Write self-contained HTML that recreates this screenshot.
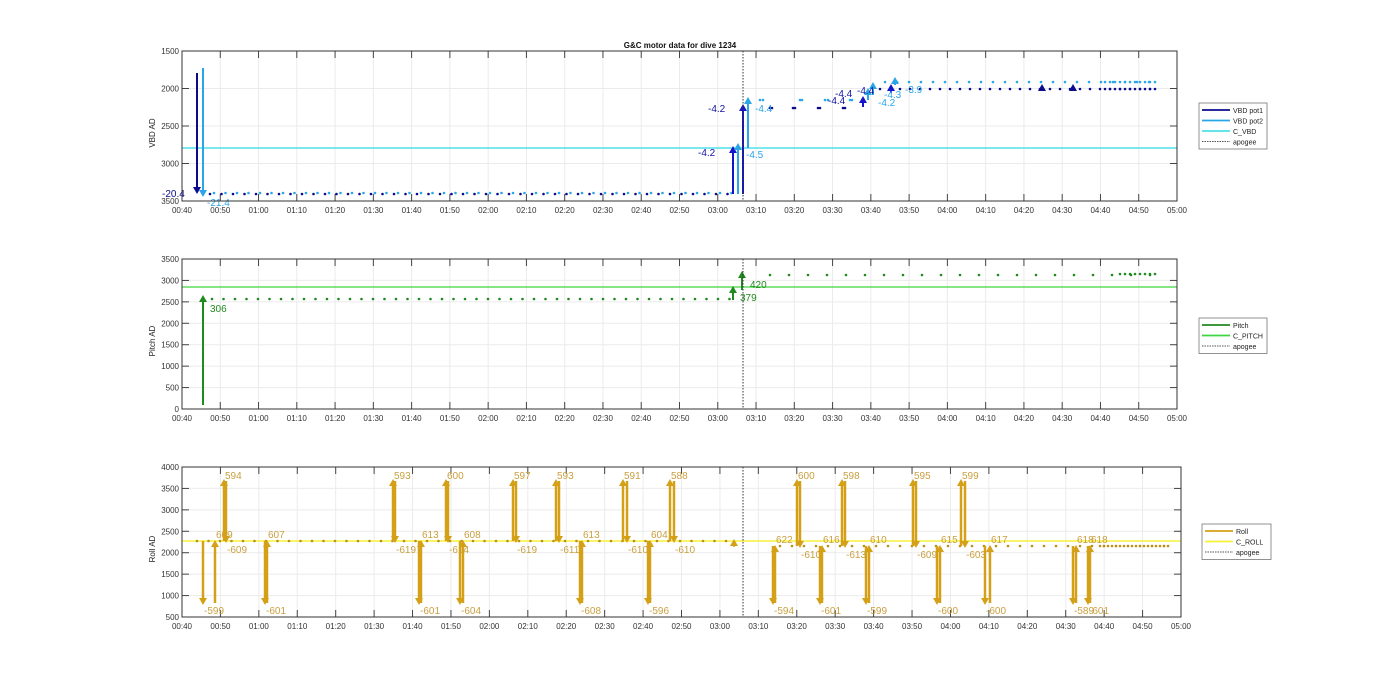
<!DOCTYPE html>
<html><head><meta charset="utf-8"><style>
html,body{margin:0;padding:0;background:#fff;}
svg{display:block;font-family:"Liberation Sans",sans-serif;}
</style></head><body>
<svg id="s" width="1400" height="693" xmlns="http://www.w3.org/2000/svg"></svg>
<script>
const S=document.getElementById('s');let h='';
const X0=182,X1=1177;
function axes(yt,yb,ymin,ymax,step,ylabel,x1){
  x1=x1||X1;
  h+=`<rect x="${X0}" y="${yt}" width="${x1-X0}" height="${yb-yt}" fill="#fff" stroke="none"/>`;
  for(let m=40;m<=300;m+=10){const x=X0+(m-40)*(x1-X0)/260;
    h+=`<line x1="${x}" y1="${yt}" x2="${x}" y2="${yb}" stroke="#ebebeb" stroke-width="1"/>`;
    h+=`<line x1="${x}" y1="${yb}" x2="${x}" y2="${yb-7}" stroke="#444"/><line x1="${x}" y1="${yt}" x2="${x}" y2="${yt+7}" stroke="#444"/>`;
    const hh=Math.floor(m/60),mm=m%60;
    h+=`<text x="${x}" y="${yb+12}" font-size="8" fill="#333" text-anchor="middle">0${hh}:${mm<10?'0'+mm:mm}</text>`;}
  for(let v=ymin;v<=ymax;v+=step){const y=yb-(v-ymin)/(ymax-ymin)*(yb-yt);
    h+=`<line x1="${X0}" y1="${y}" x2="${x1}" y2="${y}" stroke="#ebebeb"/>`;
    h+=`<line x1="${X0}" y1="${y}" x2="${X0+7}" y2="${y}" stroke="#444"/><line x1="${x1}" y1="${y}" x2="${x1-7}" y2="${y}" stroke="#444"/>`;}
  h+=`<text x="${X0-34}" y="${(yt+yb)/2}" font-size="8" fill="#222" text-anchor="middle" transform="rotate(-90 ${X0-27} ${(yt+yb)/2})">${ylabel}</text>`;
}
function border(yt,yb,x1){x1=x1||X1;h+=`<rect x="${X0}" y="${yt}" width="${x1-X0}" height="${yb-yt}" fill="none" stroke="#333" stroke-width="1"/>`;}
function ylab(y,t){h+=`<text x="${X0-3}" y="${y+3}" font-size="8" fill="#333" text-anchor="end">${t}</text>`;}
function arrow(x,y1,y2,c,w){w=w||2;const d=y2<y1?1:-1;
  h+=`<line x1="${x}" y1="${y1}" x2="${x}" y2="${y2+d*5}" stroke="${c}" stroke-width="${w}"/>`;
  h+=`<polygon points="${x-4},${y2+d*7} ${x+4},${y2+d*7} ${x},${y2}" fill="${c}"/>`;}
function txt(x,y,t,c,s){h+=`<text x="${x}" y="${y}" font-size="${s||10}" fill="${c}">${t}</text>`;}
function dot(x,y,c){h+=`<circle cx="${x}" cy="${y}" r="1.3" fill="${c}"/>`;}
h+=`<text x="680" y="48" font-size="8" font-weight="bold" text-anchor="middle" fill="#111">G&amp;C motor data for dive 1234</text>`;
// Plot 1
axes(51,201,1500,3500,500,'VBD AD');
[[51,'1500'],[88.5,'2000'],[126,'2500'],[163.5,'3000'],[201,'3500']].forEach(a=>ylab(a[0],a[1]));
h+=`<line x1="${X0}" y1="148" x2="${X1}" y2="148" stroke="#4fe0e8" stroke-width="1.5"/>`;
const DB='#0b0b8c',LB='#2aa6e8';
for(let x=210;x<735;x+=11.5){dot(x,194,DB);dot(x+4,193,LB);}
[770,772,793,795,818,820,843,845].forEach(x=>dot(x,108,DB));
[760,763,800,802,825,828,850,852].forEach(x=>dot(x,100,LB));
for(let x=880;x<1158;x+=10){dot(x,89,DB);}
for(let x=885;x<1160;x+=12){dot(x,82,LB);}
for(let x=1105;x<1160;x+=5){dot(x,82,LB);dot(x,89,DB);}
arrow(197,73,194,DB);arrow(203,68,197,LB);
txt(162,197,'-20.4',DB);txt(207,206,'-21.4',LB);
arrow(733,194,146,'#1414c8');arrow(738,194,143,LB);txt(698,156,'-4.2','#1414a0');txt(746,158,'-4.5',LB);
arrow(743,194,104,'#1414c8');arrow(748,148,97,LB);txt(708,112,'-4.2','#1414a0');txt(755,112,'-4.4',LB);
arrow(863,107,96,'#1414c8');arrow(868,100,88,LB);arrow(873,95,82,LB);arrow(891,93,84,'#1414c8');arrow(895,85,77,LB);
txt(828,104,'-4.4','#1414a0');txt(835,97,'-4.4','#1414a0');txt(857,94,'-4.4','#1414a0');txt(878,106,'-4.2',LB);txt(884,98,'-4.3',LB);txt(905,93,'-3.9',LB);
arrow(1042,91,84,DB);arrow(1073,91,84,DB);
h+=`<line x1="743" y1="51" x2="743" y2="201" stroke="#333" stroke-dasharray="1.5,1.5"/>`;
border(51,201);
// Plot 2
axes(259,409,0,3500,500,'Pitch AD');
for(let v=0;v<=3500;v+=500)ylab(409-v/3500*150,v);
const G='#1f8a1f';
h+=`<line x1="${X0}" y1="287" x2="${X1}" y2="287" stroke="#3ed63e" stroke-width="1.2"/>`;
for(let x=212;x<730;x+=11.5)dot(x,299,G);
for(let x=770;x<1158;x+=19)dot(x,275,G);
for(let x=1120;x<1158;x+=5)dot(x,274,G);
arrow(203,405,295,G);txt(210,312,'306',G);
arrow(733,300,286,G);txt(740,301,'379',G);
arrow(742,290,271,G);txt(750,288,'420',G);
h+=`<line x1="743" y1="259" x2="743" y2="409" stroke="#333" stroke-dasharray="1.5,1.5"/>`;
border(259,409);
// Plot 3
const RX1=1181;
axes(467,617,500,4000,500,'Roll AD',RX1);
for(let v=500;v<=4000;v+=500)ylab(617-(v-500)/3500*150,v);
const R='#d4a017',RT='#c9a040';
h+=`<line x1="${X0}" y1="541" x2="${RX1}" y2="541" stroke="#f5f03a" stroke-width="1.5"/>`;
for(let x=197;x<730;x+=11.5)dot(x,541,'#b8901a');
for(let x=780;x<1170;x+=12)dot(x,546,'#b8901a');
for(let x=1100;x<1170;x+=4)dot(x,546,'#b8901a');
const ev=[
[203,'d','-599'],[215,'u','609'],[224,'U','594'],[226,'D','-609'],[265,'d','-601'],[267,'u','607'],
[393,'U','593'],[395,'D','-619'],[419,'d','-601'],[421,'u','613'],[446,'U','600'],[448,'D','-614'],
[460,'d','-604'],[463,'u','608'],[513,'U','597'],[516,'D','-619'],[556,'U','593'],[559,'D','-611'],
[580,'d','-608'],[582,'u','613'],[623,'U','591'],[627,'D','-610'],[648,'d','-596'],[650,'u','604'],
[670,'U','588'],[674,'D','-610'],[773,'d','-594'],[775,'u','622'],[797,'U','600'],[800,'D','-610'],
[820,'d','-601'],[822,'u','616'],[842,'U','598'],[845,'D','-613'],[866,'d','-599'],[869,'u','610'],
[913,'U','595'],[916,'D','-609'],[937,'d','-600'],[940,'u','615'],[961,'U','599'],[965,'D','-603'],
[985,'d','-600'],[990,'u','617'],[1073,'d','-589'],[1076,'u','618'],[1088,'d','-601'],[1090,'u','618']];
const yb0=(x)=>x>745?546:541;
ev.forEach(([x,t,l])=>{const b=yb0(x);
 if(t=='d'){arrow(x,b,605,R,2.5);txt(x+1,614,l,RT);}
 else if(t=='u'){arrow(x,603,b-1,R,2.5);txt(x+1,b-3,l,RT);}
 else if(t=='U'){arrow(x,b,479,R,2.5);txt(x+1,479,l,RT);}
 else {arrow(x,481,b+2,R,2.5);txt(x+1,b+12,l,RT);}
});
arrow(734,547,539,R,1.5);
h+=`<line x1="743" y1="467" x2="743" y2="617" stroke="#333" stroke-dasharray="1.5,1.5"/>`;
border(467,617,RX1);
function legend(x,y,w,items){const H=items.length*10.5+4;
 h+=`<rect x="${x}" y="${y}" width="${w}" height="${H}" fill="#fff" stroke="#777" stroke-width="0.8"/>`;
 items.forEach((it,i)=>{const yy=y+7+i*10.5;
  h+=`<line x1="${x+3}" y1="${yy}" x2="${x+31}" y2="${yy}" stroke="${it[1]}" stroke-width="${it[2]?1:1.8}" ${it[2]?'stroke-dasharray="1.5,1"':''}/>`;
  h+=`<text x="${x+34}" y="${yy+3}" font-size="7" fill="#222">${it[0]}</text>`;});}
legend(1199,103,68,[['VBD pot1','#0b0b8c'],['VBD pot2','#2aa6e8'],['C_VBD','#4fe0e8'],['apogee','#555',1]]);
legend(1199,318,68,[['Pitch','#1f8a1f'],['C_PITCH','#3ed63e'],['apogee','#555',1]]);
legend(1202,524,69,[['Roll','#d4a017'],['C_ROLL','#f5f03a'],['apogee','#555',1]]);
S.innerHTML=h;
</script>
</body></html>
